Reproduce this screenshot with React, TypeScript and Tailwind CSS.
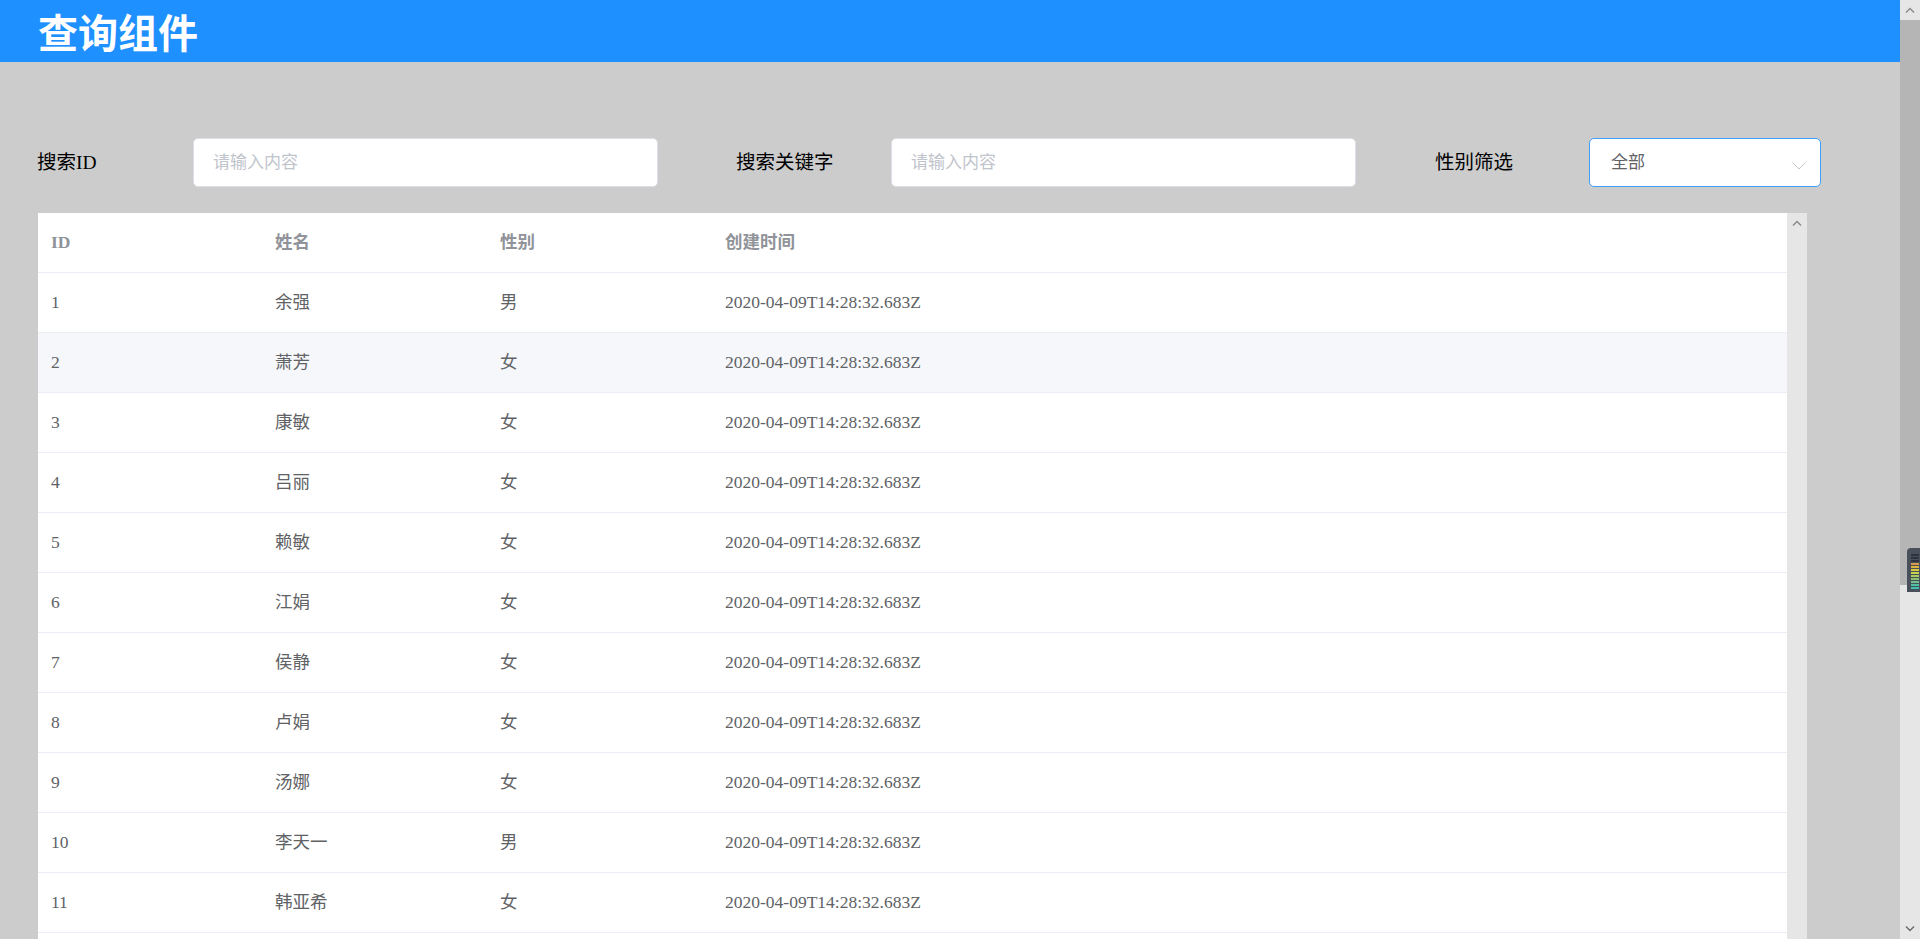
import React from 'react'

const names = ['余强', '萧芳', '康敏', '吕丽', '赖敏', '江娟', '侯静', '卢娟', '汤娜', '李天一', '韩亚希']
const genders = ['男', '女', '女', '女', '女', '女', '女', '女', '女', '男', '女']

const rows = names.map((name, i) => ({
  id: i + 1,
  name,
  gender: genders[i],
  createdAt: '2020-04-09T14:28:32.683Z',
}))

const serif = 'font-["Liberation_Serif","Noto_Sans_CJK_SC",serif]'

function Chevron({ up = false, className = '' }: { up?: boolean; className?: string }) {
  return (
    <svg width="10" height="6" viewBox="0 0 10 6" className={className}>
      <path
        d={up ? 'M1 5.5 L5 1.5 L9 5.5' : 'M1 0.5 L5 4.5 L9 0.5'}
        fill="none"
        stroke="currentColor"
        strokeWidth="1.4"
      />
    </svg>
  )
}

function TextInput() {
  return (
    <div className="flex h-[49px] w-[465px] items-center rounded-[5px] border border-[#dcdfe6] bg-white px-[19px]">
      <span className="text-[17px] text-[#c0c4cc]">请输入内容</span>
    </div>
  )
}

export default function App() {
  return (
    <div className={`relative flex h-[939px] overflow-hidden bg-[#cccccc] ${serif}`}>
      <div className="flex min-w-0 flex-1 flex-col">
        {/* Header */}
        <header className="flex h-[62px] shrink-0 items-center bg-[#1e90ff] pl-[38px]">
          <h1 className='font-["Noto_Sans_CJK_SC",sans-serif] text-[40px] leading-none font-bold text-white'>
            查询组件
          </h1>
        </header>

        {/* Filters */}
        <div className="flex shrink-0 pt-[76px] pl-[37px] text-[19.5px] text-black">
          <div className="flex w-[699px] items-center">
            <span className="w-[156px]">搜索ID</span>
            <TextInput />
          </div>
          <div className="flex w-[699px] items-center">
            <span className="w-[155px]">搜索关键字</span>
            <TextInput />
          </div>
          <div className="flex items-center">
            <span className="w-[154px]">性别筛选</span>
            <div className="flex h-[49px] w-[232px] items-center justify-between rounded-[5px] border border-[#409eff] bg-white pr-[14px] pl-[21px]">
              <span className="text-[17px] text-[#606266]">全部</span>
              <svg width="14" height="8" viewBox="0 0 14 8" className="mt-[6px] text-[#c0c4cc]">
                <path d="M0.5 0.5 L7 7 L13.5 0.5" fill="none" stroke="currentColor" strokeWidth="1" />
              </svg>
            </div>
          </div>
        </div>

        {/* Table */}
        <div className="mt-[26px] ml-[38px] flex min-h-0 w-[1769px] flex-1">
          <div className="w-[1749px] overflow-hidden bg-white text-[17.5px]">
            <div className="flex h-[60px] items-center border-b border-[#ebeef5] font-bold text-[#909399]">
              <div className="w-[225px] pl-[13px]">ID</div>
              <div className="w-[225px] pl-[12px]">姓名</div>
              <div className="w-[225px] pl-[12px]">性别</div>
              <div className="flex-1 pl-[12px]">创建时间</div>
            </div>
            {rows.map((row) => (
              <div
                key={row.id}
                className={`flex h-[60px] items-center border-b border-[#ebeef5] text-[#606266] ${
                  row.id === 2 ? 'bg-[#f5f7fa]' : 'bg-white'
                }`}
              >
                <div className="w-[225px] pl-[13px]">{row.id}</div>
                <div className="w-[225px] pl-[12px]">{row.name}</div>
                <div className="w-[225px] pl-[12px]">{row.gender}</div>
                <div className="flex-1 pl-[12px]">{row.createdAt}</div>
              </div>
            ))}
          </div>
          {/* table scrollbar */}
          <div className="flex w-[20px] justify-center bg-[#e6e6e6] pt-[7px]">
            <Chevron up className="text-[#8a8a8a]" />
          </div>
        </div>
      </div>

      {/* page scrollbar */}
      <div className="flex w-[20px] shrink-0 flex-col bg-[#e6e6e6]">
        <div className="flex h-[20px] items-center justify-center">
          <Chevron up className="text-[#8a8a8a]" />
        </div>
        <div className="h-[565px] bg-[#b5b5b5]" />
        <div className="flex-1" />
        <div className="flex h-[20px] items-center justify-center">
          <Chevron className="text-[#6a6a6a]" />
        </div>
      </div>

      {/* floating meter widget */}
      <div className="absolute top-[548px] left-[1907px] flex h-[44px] w-[16px] flex-col gap-[1px] rounded-tl-[4px] bg-[#4a4f5c] px-[4px] pt-[6px]">
        {['#2e3340', '#2e3340', '#2e3340', '#d9984a', '#e0b040', '#d8c840', '#c8d050', '#a8c860', '#88c070', '#70c090', '#50c0a0', '#40c0b0'].map(
          (c, i) => (
            <div key={i} className="h-[2px] w-full" style={{ backgroundColor: c }} />
          ),
        )}
      </div>
    </div>
  )
}
